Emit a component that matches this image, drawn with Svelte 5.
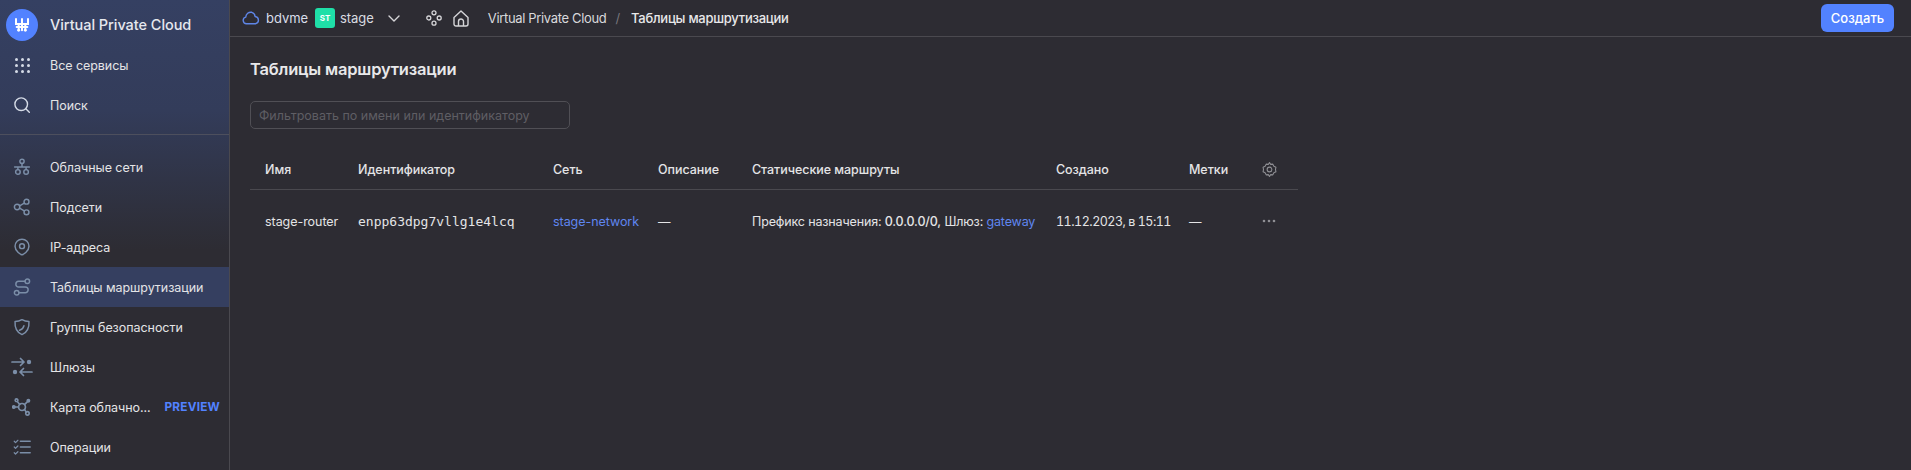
<script>
  const services = [
    { name: "Облачные сети", icon: "network" },
    { name: "Подсети", icon: "share" },
    { name: "IP-адреса", icon: "pin" },
    { name: "Таблицы маршрутизации", icon: "route", active: true },
    { name: "Группы безопасности", icon: "shield" },
    { name: "Шлюзы", icon: "gateway", size: 22 },
    { name: "Карта облачно...", icon: "map", size: 20 },
    { name: "Операции", icon: "tasks" }
  ];
  services[6].badge = "PREVIEW";
</script>

<div class="page">
  <aside class="sidebar">
    <div class="product">
      <span class="logo">
        <svg width="16" height="16" viewBox="0 0 24 24" fill="none" stroke="#fff" stroke-width="3" stroke-linecap="round">
          <path d="M3 3v7.500h18V3M12 3v17M7 10.500v8M17 10.500v8M4 15h16" />
          <circle cx="7" cy="20" r="2.200" fill="#fff" stroke="none" />
          <circle cx="17" cy="20" r="2.200" fill="#fff" stroke="none" />
        </svg>
      </span>
      <span class="product-name">Virtual Private Cloud</span>
    </div>
    <div class="item">
      <span class="ico">
        <svg width="15" height="15" viewBox="0 0 15 15" fill="#d5dbe6">
          {#each [1.5, 7.5, 13.5] as y}
            {#each [1.5, 7.5, 13.5] as x}
              <circle cx={x} cy={y} r="1.500" />
            {/each}
          {/each}
        </svg>
      </span>
      <span>Все сервисы</span>
    </div>
    <div class="item">
      <span class="ico">
        <svg width="16" height="16" viewBox="0 0 16 16" fill="none" stroke="#d5dbe6" stroke-width="1.400" stroke-linecap="round">
          <circle cx="7.200" cy="7.200" r="6.300" />
          <path d="M11.800 11.800l3.500 3.500" />
        </svg>
      </span>
      <span>Поиск</span>
    </div>
    <div class="divider"></div>
    <nav class="services">
      {#each services as s}
        <div class="item" class:active={s.active}>
          <span class="ico">
            <svg width={s.size ?? 18} height={s.size ?? 18} viewBox="0 0 22 22" fill="none" stroke="#7b8ea8" stroke-width="1.800" stroke-linecap="round" stroke-linejoin="round">
              {#if s.icon === "network"}
                <circle cx="11" cy="4" r="2.600" />
                <path d="M11 6.600V11M2 11h18M6 11v3M16 11v3" />
                <circle cx="6" cy="17" r="2.800" />
                <circle cx="16" cy="17" r="2.800" />
              {:else if s.icon === "share"}
                <circle cx="5" cy="11" r="3.300" />
                <circle cx="16.500" cy="4.500" r="3" />
                <circle cx="16.500" cy="17.500" r="3" />
                <path d="M8 9.500L13.800 6.200M8 12.500L13.800 15.800" />
              {:else if s.icon === "pin"}
                <path d="M11 20.500c-1 0-8.500-4-8.500-10.500a8.500 8.500 0 0 1 17 0c0 6.500-7.500 10.500-8.500 10.500z" />
                <circle cx="11" cy="10" r="3" />
              {:else if s.icon === "route"}
                <circle cx="17.500" cy="4" r="2.800" />
                <circle cx="4.500" cy="18" r="2.800" />
                <path d="M14.700 4H7a3.500 3.500 0 0 0 0 7h8a3.500 3.500 0 0 1 0 7H7.300" />
              {:else if s.icon === "shield"}
                <path d="M11 2c2.800 1.700 5 2.300 8.500 2.300.5 8-2.800 13.700-8.500 16C5.300 18 2 12.300 2.500 4.300 6 4.300 8.200 3.700 11 2z" />
                <path d="M8 15c2.400-.6 4.800-3 5.400-5.500" />
              {:else if s.icon === "gateway"}
                <path d="M1 6h12M9.500 2.500L13 6l-3.500 3.500M21 16H9M12.500 12.500L9 16l3.500 3.500" stroke-width="1.700" />
                <circle cx="18" cy="6" r="2.200" fill="#7b8ea8" stroke="none" />
                <circle cx="4" cy="16" r="2.200" fill="#7b8ea8" stroke="none" />
              {:else if s.icon === "map"}
                <circle cx="11" cy="11" r="3.800" />
                <circle cx="5" cy="3.500" r="1.500" />
                <circle cx="2" cy="11" r="1.300" fill="#7b8ea8" />
                <circle cx="18" cy="4" r="1.300" fill="#7b8ea8" />
                <circle cx="17" cy="18" r="1.900" />
                <path d="M5.800 5l2.700 3.300M3.500 11h3.700M16.800 5.300L13.700 8.300M13.800 13.800l1.900 2.800" />
              {:else if s.icon === "tasks"}
                <path d="M9 4h12M9 11h12M9 18h12" />
                <path d="M1.500 4l1.600 1.600L6 2.800M1.500 11l1.600 1.600L6 9.800M1.500 18l1.600 1.600L6 16.800" stroke-width="1.500" />
              {/if}
            </svg>
          </span>
          <span class="label">{s.name}</span>
          {#if s.badge}
            <span class="badge">{s.badge}</span>
          {/if}
        </div>
      {/each}
    </nav>
  </aside>

  <div class="main">
    <header class="topbar">
      <div class="crumbs">
        <svg class="cloud" width="18" height="14" viewBox="0 0 18 14" fill="none" stroke="#5f86e8" stroke-width="1.400" stroke-linejoin="round">
          <path d="M4.500 12.800a3.400 3.400 0 0 1-.7-6.700A5 5 0 0 1 9.800 1.300a4.800 4.800 0 0 1 3.300 4.200 3.700 3.700 0 0 1 .4 7.300z" />
        </svg>
        <span class="cloud-name">bdvme</span>
        <span class="folder-badge">ST</span>
        <span class="folder-name">stage</span>
        <svg class="chevron" width="12" height="7" viewBox="0 0 12 7" fill="none" stroke="#d5d5d8" stroke-width="1.400" stroke-linecap="round" stroke-linejoin="round">
          <path d="M1 1l5 5 5-5" />
        </svg>
        <svg class="apps" width="16" height="16" viewBox="0 0 16 16" fill="none" stroke="#d5d5d8" stroke-width="1.300">
          <circle cx="8" cy="2.800" r="2" />
          <circle cx="2.800" cy="8" r="2" />
          <circle cx="13.200" cy="8" r="2" />
          <circle cx="8" cy="13.200" r="2" />
        </svg>
        <svg class="home" width="16" height="17" viewBox="0 0 16 17" fill="none" stroke="#d5d5d8" stroke-width="1.400" stroke-linejoin="round">
          <path d="M1 7.500L8 1l7 6.500V14a2 2 0 0 1-2 2H3a2 2 0 0 1-2-2z" />
          <path d="M5.500 16v-4.500a2.500 2.500 0 0 1 5 0V16" />
        </svg>
        <span class="crumb">Virtual Private Cloud</span>
        <span class="slash">/</span>
        <span class="crumb current">Таблицы маршрутизации</span>
      </div>
      <button class="create">Создать</button>
    </header>

    <section class="content">
      <h1>Таблицы маршрутизации</h1>
      <input class="filter" type="text" placeholder="Фильтровать по имени или идентификатору" />
      <table>
        <colgroup>
          <col style="width: 93px" />
          <col style="width: 195px" />
          <col style="width: 105px" />
          <col style="width: 94px" />
          <col style="width: 304px" />
          <col style="width: 133px" />
          <col style="width: 73px" />
          <col style="width: 51px" />
        </colgroup>
        <thead>
          <tr>
            <th>Имя</th>
            <th>Идентификатор</th>
            <th>Сеть</th>
            <th>Описание</th>
            <th>Статические маршруты</th>
            <th>Создано</th>
            <th>Метки</th>
            <th>
              <svg class="gear" width="15" height="17" viewBox="0 0 14 15" fill="none" stroke="#8f8f94" stroke-width="1" stroke-linejoin="round">
                <path d="M7 1l1.100 1.700 2-.2 1 1.900 1.900.9-.4 2.200.4 2.200-1.900.9-1 1.900-2-.2L7 14l-1.100-1.700-2 .2-1-1.900L1 9.700l.4-2.200L1 5.300l1.900-.9 1-1.900 2 .2z" />
                <circle cx="7" cy="7.500" r="2.200" />
              </svg>
            </th>
          </tr>
        </thead>
        <tbody>
          <tr>
            <td>stage-router</td>
            <td class="mono">enpp63dpg7vllg1e4lcq</td>
            <td><span class="link">stage-network</span></td>
            <td>—</td>
            <td class="routes">Префикс назначения: <span class="strong">0.0.0.0/0,</span> Шлюз: <span class="link">gateway</span></td>
            <td class="date">11.12.2023, в 15:11</td>
            <td>—</td>
            <td>
              <svg class="dots" width="14" height="4" viewBox="0 0 14 4" fill="#8f8f94">
                <circle cx="2" cy="2" r="1.300" />
                <circle cx="7" cy="2" r="1.300" />
                <circle cx="12" cy="2" r="1.300" />
              </svg>
            </td>
          </tr>
        </tbody>
      </table>
    </section>
  </div>
</div>

<style>
  :global(body) {
    background: #2d2c33;
    font-family: Inter, "Noto Sans", sans-serif;
    color: #e4e4e6;
  }

  .page {
    display: flex;
    height: 470px;
    overflow: hidden;
    font-size: 12.500px;
    letter-spacing: -0.05px;
  }

  .sidebar {
    width: 229px;
    flex-shrink: 0;
    border-right: 1px solid #4a494f;
    background: linear-gradient(180deg, #354062 0, #333c5a 110px, #2d2c33 250px);
  }

  .product {
    height: 45px;
    padding-left: 6px;
    display: flex;
    align-items: center;
    gap: 12px;
    box-sizing: border-box;
  }

  .logo {
    width: 32px;
    height: 32px;
    margin-top: 5px;
    border-radius: 50%;
    background: #5282ff;
    display: flex;
    align-items: center;
    justify-content: center;
  }

  .product-name {
    font-size: 14.500px;
    font-weight: 500;
    margin-top: 3px;
    color: #e6e8ee;
  }

  .item {
    height: 40px;
    display: flex;
    align-items: center;
    color: #e4e4e6;
  }

  .item.active {
    background: #353f60;
  }

  .ico {
    width: 44px;
    margin-right: 6px;
    display: flex;
    justify-content: center;
    flex-shrink: 0;
  }

  .label {
    flex: 1;
  }

  .badge {
    margin-right: 9px;
    color: #5282ff;
    font-size: 11.800px;
    font-weight: 700;
    letter-spacing: 0.2px;
  }

  .divider {
    height: 1px;
    margin-top: 9px;
    background: #4d4f5d;
  }

  .services {
    margin-top: 12px;
  }

  .main {
    flex: 1;
    min-width: 0;
  }

  .topbar {
    height: 37px;
    box-sizing: border-box;
    border-bottom: 1px solid #4a494f;
    padding: 0 17px 0 12px;
    display: flex;
    align-items: center;
    justify-content: space-between;
    font-size: 13px;
  }

  .crumbs {
    display: flex;
    align-items: center;
  }

  .cloud-name {
    margin-left: 6px;
    color: #d9deea;
  }

  .folder-badge {
    width: 20px;
    height: 20px;
    margin-left: 7px;
    border-radius: 3px;
    background: #1fdfa8;
    color: #fff;
    font-size: 8px;
    font-weight: 700;
    display: flex;
    align-items: center;
    justify-content: center;
  }

  .folder-name {
    margin-left: 5px;
    color: #d9dbe0;
  }

  .chevron {
    margin-left: 14px;
  }

  .apps {
    margin-left: 26px;
  }

  .home {
    margin-left: 11px;
  }

  .crumb {
    margin-left: 19px;
    letter-spacing: -0.34px;
    color: #d9d9dc;
  }

  .slash {
    margin-left: 9px;
    color: #77767c;
  }

  .crumb.current {
    margin-left: 11px;
    letter-spacing: -0.27px;
    font-weight: 500;
    color: #e8e8ea;
  }

  .create {
    width: 73px;
    height: 28px;
    border: none;
    border-radius: 6px;
    background: #5282ff;
    color: #fff;
    font: inherit;
    font-weight: 500;
  }

  .content {
    padding: 0 20px;
  }

  h1 {
    margin: 22px 0 0;
    font-size: 16.500px;
    line-height: 20px;
    font-weight: 600;
    letter-spacing: -0.2px;
    color: #e8e8ea;
  }

  .filter {
    display: block;
    width: 320px;
    height: 28px;
    margin-top: 22px;
    padding: 0 8px;
    box-sizing: border-box;
    border: 1px solid #504f55;
    border-radius: 5px;
    background: transparent;
    font: inherit;
    color: #e4e4e6;
  }

  .filter::placeholder {
    color: #5f5e64;
  }

  table {
    width: 1048px;
    margin-top: 20px;
    table-layout: fixed;
    border-collapse: collapse;
  }

  th {
    height: 40px;
    padding: 0 0 0 15px;
    text-align: left;
    font-weight: 500;
    color: #e4e4e6;
    border-bottom: 1px solid #4a494f;
  }

  td {
    height: 62px;
    padding: 0 0 0 15px;
    white-space: nowrap;
    color: #e4e4e6;
  }

  .mono {
    font-family: "DejaVu Sans Mono", monospace;
    font-size: 13px;
    letter-spacing: 0;
  }

  .routes {
    letter-spacing: -0.15px;
  }

  .date {
    font-variant-numeric: tabular-nums;
    letter-spacing: -0.5px;
  }

  .link {
    color: #5f86f0;
  }

  .strong {
    font-weight: 500;
  }

  .gear, .dots {
    display: block;
  }
</style>
